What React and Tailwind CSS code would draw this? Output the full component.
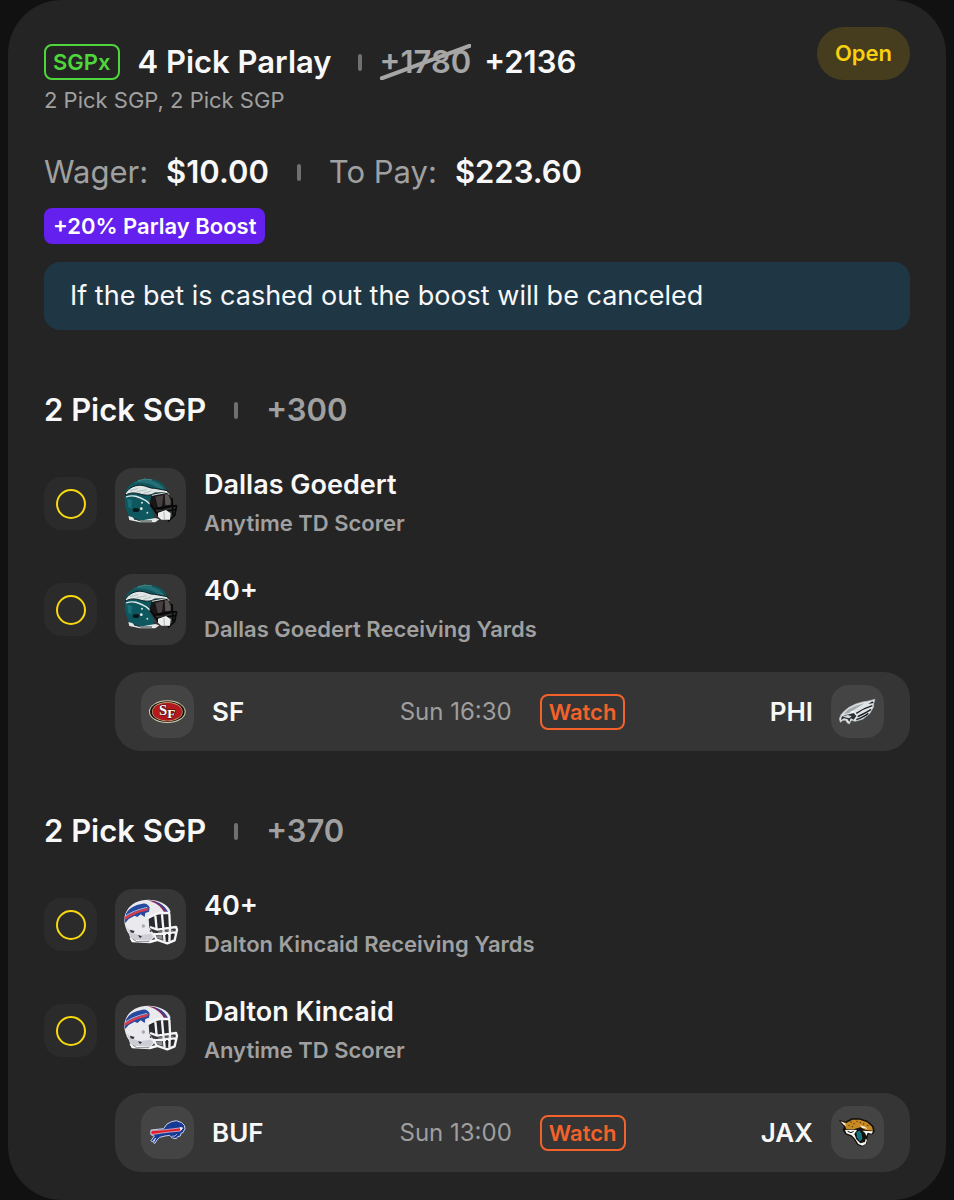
import clsx from "clsx";

const groups = [
  {
    id: 1,
    title: "2 Pick SGP",
    odds: "+300",
    helmet: "eagles",
    legs: [
      { id: 1, title: "Dallas Goedert", market: "Anytime TD Scorer" },
      { id: 2, title: "40+", market: "Dallas Goedert Receiving Yards" },
    ],
    match: { away: "SF", home: "PHI", time: "Sun 16:30" },
  },
  {
    id: 2,
    title: "2 Pick SGP",
    odds: "+370",
    helmet: "bills",
    legs: [
      { id: 1, title: "40+", market: "Dalton Kincaid Receiving Yards" },
      { id: 2, title: "Dalton Kincaid", market: "Anytime TD Scorer" },
    ],
    match: { away: "BUF", home: "JAX", time: "Sun 13:00" },
  },
];

const EaglesHelmet = () => (
  <svg viewBox="1 8 213 213" className="w-full h-full" aria-hidden="true">
    {/* shell */}
    <path
      d="M30 96 C29 80 36 66 50 56 C66 42 92 37 114 42 C138 47 152 60 157 76 L112 90 L104 118 L120 148 L112 168 L48 162 L41 148 C33 132 30 112 30 96 Z"
      fill="#0f575e"
    />
    <path d="M54 53 C78 40 112 41 130 54 C142 62 148 70 151 76 L126 66 C104 52 78 50 54 53 Z" fill="#256f74" />
    <path d="M88 41 L112 44 M70 46 L90 42" stroke="#5f9fa0" strokeWidth="2" />
    {/* wing */}
    <path
      d="M32 84 C44 66 62 58 82 60 C96 62 106 70 120 69 L158 76 L160 82 L120 83 C108 92 90 90 76 86 C62 82 46 80 33 90 Z"
      fill="#dfe6e6"
      stroke="#0b1c1e"
      strokeWidth="3"
    />
    <path d="M46 76 L70 70 M66 79 L96 73 M86 84 L110 77" stroke="#9dabab" strokeWidth="2" />
    <path d="M34 95 C58 86 74 96 94 106 L112 122" stroke="#dfe8e8" strokeWidth="4" fill="none" />
    <path d="M38 100 L52 104 L50 130 L40 124 Z" fill="#187078" />
    <ellipse cx="64" cy="134" rx="10" ry="6" fill="#07181a" />
    <circle cx="82" cy="112" r="3" fill="#d9e6e6" />
    <circle cx="80" cy="130" r="4" fill="#e8f0f0" />
    <circle cx="98" cy="142" r="3" fill="#c6d6d6" />
    {/* visor */}
    <path d="M110 92 L158 82 L170 98 L172 124 L146 134 L122 134 L104 118 Z" fill="#191617" />
    <path d="M122 94 L146 89 L142 122 L130 127 Z" fill="#45403f" />
    <path d="M150 87 L160 87 L168 104 L168 118 L152 120 Z" fill="#595453" />
    <path d="M112 90 L158 81 L163 88" stroke="#cfd5d5" strokeWidth="3" fill="none" />
    {/* cage and chin guard */}
    <path
      d="M122 130 L186 121 M126 142 L184 132 M172 98 L175 150 M186 121 L180 150 L160 168 M108 118 L132 152"
      stroke="#070707"
      strokeWidth="5"
      fill="none"
    />
    <path d="M130 142 L154 134 L168 144 L166 163 L140 163 L130 154 Z" fill="#eceeee" />
    <path d="M148 140 L149 162" stroke="#8c9292" strokeWidth="2" />
    <path d="M41 152 L54 156 L60 163 L84 165 L122 158 L134 162 L122 171 L76 171 L44 164 Z" fill="#e3e7e7" />
    <path d="M58 160 L78 167 L112 167" stroke="#243436" strokeWidth="3" fill="none" />
  </svg>
);

const BillsHelmet = () => (
  <svg viewBox="1 8 213 213" className="w-full h-full" aria-hidden="true">
    {/* shell */}
    <path
      d="M29 100 C30 78 41 60 61 49 C84 37 118 37 142 49 C157 56 166 66 168 78 L122 86 L102 98 L104 124 L122 148 L104 170 L50 165 L43 144 C35 132 29 116 29 100 Z"
      fill="#e9e9ee"
    />
    <path d="M36 122 C48 134 58 144 78 146 L108 142 L116 150 L104 168 L50 163 L44 144 Z" fill="#cdced5" />
    <path d="M98 42 C126 42 148 54 158 78 L148 78 C140 60 122 48 98 42 Z" fill="#8d2550" />
    <path d="M112 43 C136 48 152 60 161 78 L155 78 C146 61 130 50 112 43 Z" fill="#3247a0" />
    {/* charging buffalo decal */}
    <path
      d="M34 82 C44 64 62 56 80 53 C90 48 102 54 105 64 L103 76 L92 80 L90 92 L78 84 L68 92 L60 88 L42 98 L32 110 L30 98 Z"
      fill="#254a9f"
    />
    <path d="M30 92 C46 80 68 72 102 64 L100 72 C70 79 50 87 31 102 Z" fill="#d83b4b" />
    <path d="M31 90 C48 78 68 70 98 63" stroke="#f4f4f7" strokeWidth="2" fill="none" />
    <path d="M46 130 L60 134 L56 140 L48 138 Z M70 146 L82 150 L76 156 Z" fill="#30303a" />
    <circle cx="86" cy="119" r="5" fill="#a9aab1" />
    <circle cx="108" cy="134" r="3" fill="#44444c" />
    {/* face opening */}
    <path d="M104 98 L124 87 L160 82 L164 124 L150 134 L128 136 L106 122 Z" fill="#292a2e" />
    {/* cage */}
    <path
      d="M100 94 L130 80 L166 80 M122 88 L126 130 M142 84 L146 128 M164 82 L166 122 M106 122 L128 130 L184 122 L187 130 L180 162 L158 171 L126 160 L116 140 M118 144 L182 138 M146 128 L150 166 M166 124 L164 166"
      stroke="#f5f5f8"
      strokeWidth="7"
      strokeLinejoin="round"
      fill="none"
    />
    <path d="M124 148 L142 146 L144 160 L128 156 Z" fill="#8c8d94" />
    <path d="M154 144 L160 143 L160 162 L154 162 Z M170 143 L178 142 L172 158 Z" fill="#1f2023" />
    <path d="M130 137 L176 132" stroke="#b9bac2" strokeWidth="2" />
    <path d="M44 154 L62 161 L104 163 L124 158 L130 164 L106 171 L52 168 Z" fill="#fafafc" />
    <path d="M54 158 L66 166 L104 166" stroke="#4b4c53" strokeWidth="2" fill="none" />
  </svg>
);

const NinersLogo = () => (
  <svg viewBox="6 15 159 159" className="w-full h-full" aria-hidden="true">
    <ellipse cx="85" cy="95" rx="55" ry="34" fill="#d9cfb4" />
    <ellipse cx="85" cy="95" rx="52" ry="31" fill="#15110f" />
    <ellipse cx="85" cy="95" rx="46" ry="29" fill="#c9a875" />
    <ellipse cx="85" cy="95" rx="44" ry="27" fill="#b3191d" />
    <g
      fontFamily="Liberation Serif, serif"
      fontWeight="700"
      fill="#ffffff"
      stroke="#3a0d0d"
      strokeWidth="3"
      paintOrder="stroke"
    >
      <text x="60" y="106" fontSize="44">S</text>
      <text x="85" y="113" fontSize="40">F</text>
    </g>
  </svg>
);

const EaglesLogo = () => (
  <svg viewBox="210 15 159 159" className="w-full h-full" aria-hidden="true">
    <path
      d="M342 58 L322 63 L304 66 L284 72 L264 82 L250 93 L240 104 L235 116 L238 127 L246 121 L254 121 L258 128 L265 132 L271 121 L282 124 L294 121 L306 117 L316 109 L326 101 L332 91 L338 80 L338 71 Z"
      fill="#dfe3e5"
      stroke="#b9bfc1"
      strokeWidth="2"
      strokeLinejoin="round"
    />
    <path d="M262 88 L284 77 L310 70 L288 84 L266 98 L248 102 Z" fill="#a3abaf" />
    <path
      d="M286 100 C300 90 318 82 334 77 M290 110 C304 103 318 96 330 88 M286 119 C300 114 314 108 322 100"
      stroke="#1a1f22"
      strokeWidth="4"
      fill="none"
    />
    <path d="M334 64 L322 72 L338 69 Z" fill="#1a1f22" />
    <path d="M264 103 L278 99 L286 108 L278 119 L269 115 L265 126 L259 117 L248 115 L240 121 L242 110 L252 105 Z" fill="#2b3235" />
    <path d="M245 109 L260 105 L272 109 L264 115 L252 112 Z" fill="#d3d9db" />
    <path d="M266 96 L280 92 L276 99 Z" fill="#ffffff" />
  </svg>
);

const BillsLogo = () => (
  <svg viewBox="6 20 159 159" className="w-full h-full" aria-hidden="true">
    <path
      d="M36 92 L74 88 L84 74 L98 67 L112 64 L128 70 L136 78 L138 88 L132 100 L126 102 L124 110 L116 112 L112 118 L100 116 L92 108 L78 110 L62 114 L54 122 L48 132 L43 130 L50 116 L40 128 L36 124 L46 110 L36 106 Z"
      fill="#153a94"
      stroke="#c9cfea"
      strokeWidth="3"
      strokeLinejoin="round"
    />
    <path d="M36 94 L80 91 L130 85 L124 95 L84 99 L36 106 Z" fill="#e01f2e" stroke="#f4d6dc" strokeWidth="2" />
    <path d="M122 83 L132 86 L125 94 Z" fill="#f3f4fa" />
    <path d="M98 111 L108 110 L114 104" stroke="#dfe3f4" strokeWidth="2" fill="none" />
  </svg>
);

const JaguarsLogo = () => (
  <svg viewBox="240 50 159 159" className="w-full h-full" aria-hidden="true">
    <path
      d="M266 94 L284 98 L302 88 L326 88 L350 96 L366 110 L370 126 L364 134 L350 134 L348 146 L346 162 L334 171 L320 166 L310 150 L300 140 L284 134 L276 122 L280 112 Z"
      fill="#14110d"
      stroke="#14110d"
      strokeWidth="3"
      strokeLinejoin="round"
    />
    <path d="M270 96 L286 101 L304 91 L326 91 L348 99 L363 112 L366 124 L344 122 L328 114 L308 120 L286 120 L282 110 Z" fill="#c98a22" />
    <path d="M268 96 L282 102 L286 110 L278 106 Z M326 108 L342 112 L350 118 L334 116 Z" fill="#f4efe4" />
    <path d="M282 122 L306 121 L318 122 L310 134 L316 150 L328 162 L342 158 L344 148 L348 152 L344 164 L334 169 L322 164 L312 148 L302 138 L286 132 Z" fill="#f6f5f1" />
    <path d="M316 128 L326 124 L332 134 L334 150 L326 156 L318 144 Z" fill="#0f7480" />
    <path d="M334 124 L366 126 L362 133 L350 130 L346 140 L342 130 Z" fill="#f6f5f1" />
    <g fill="#3c2a10">
      <circle cx="300" cy="98" r="2" />
      <circle cx="309" cy="103" r="2" />
      <circle cx="318" cy="96" r="2" />
      <circle cx="294" cy="108" r="2" />
      <circle cx="328" cy="100" r="2" />
      <circle cx="304" cy="112" r="2" />
      <circle cx="338" cy="104" r="2" />
      <circle cx="350" cy="108" r="2" />
    </g>
    <path d="M290 126 L300 130 L308 126" stroke="#14110d" strokeWidth="3" fill="none" />
  </svg>
);

const helmets = { eagles: EaglesHelmet, bills: BillsHelmet };
const logos = { SF: NinersLogo, PHI: EaglesLogo, BUF: BillsLogo, JAX: JaguarsLogo };

const Divider = ({ className }) => (
  <span className={clsx("w-1 h-[17px] rounded-xs bg-[#707070] shrink-0", className)} />
);

const TeamLogo = ({ team }) => {
  const Logo = logos[team];
  return (
    <div className="w-[53px] h-[53px] rounded-[18px] bg-[#444444] overflow-hidden shrink-0">
      <Logo />
    </div>
  );
};

const Leg = ({ leg, helmet }) => {
  const Helmet = helmets[helmet];
  return (
    <li className="flex items-center gap-[18px]">
      <div className="w-[53px] h-[53px] rounded-[18px] bg-[#2b2b2b] flex items-center justify-center shrink-0">
        <span className="w-[30px] h-[30px] rounded-full border-2 border-[#f8d90f]" />
      </div>
      <div className="w-[71px] h-[71px] rounded-[18px] bg-[#363636] overflow-hidden shrink-0">
        <Helmet />
      </div>
      <div className="flex flex-col gap-2 min-w-0">
        <p className="text-[27px] leading-[30px] font-semibold text-[#f8f8f8]">{leg.title}</p>
        <p className="text-[22px] leading-[30px] font-semibold text-[#a0a0a0]">{leg.market}</p>
      </div>
    </li>
  );
};

const MatchBar = ({ match }) => (
  <div className="ml-[71px] mt-[27px] px-[26px] py-[13px] rounded-[26px] bg-[#353535] grid grid-cols-[1fr_auto_1fr] items-center">
    <div className="flex items-center gap-[18px]">
      <TeamLogo team={match.away} />
      <span className="text-[26px] leading-[30px] font-semibold text-[#f8f8f8]">{match.away}</span>
    </div>
    <div className="flex items-center gap-7">
      <span className="text-[24px] leading-[30px] text-[#9e9e9e]">{match.time}</span>
      <button className="h-9 px-[7px] rounded-lg border-2 border-[#f2622a] text-[22px] leading-[30px] font-semibold text-[#f2622a] cursor-pointer">
        Watch
      </button>
    </div>
    <div className="flex items-center justify-end gap-[18px]">
      <span className="text-[26px] leading-[30px] font-semibold text-[#f8f8f8]">{match.home}</span>
      <TeamLogo team={match.home} />
    </div>
  </div>
);

const PickGroup = ({ group }) => (
  <section className="mt-[60px]">
    <div className="flex items-center text-[31px] leading-[40px] font-semibold">
      <h2 className="text-[#f8f8f8]">{group.title}</h2>
      <Divider className="mx-7" />
      <span className="text-[#a0a0a0]">{group.odds}</span>
    </div>
    <ul className="mt-[38px] flex flex-col gap-[35px]">
      {group.legs.map((leg) => (
        <Leg key={leg.id} leg={leg} helmet={group.helmet} />
      ))}
    </ul>
    <MatchBar match={group.match} />
  </section>
);

const App = () => {
  return (
    <div className="min-h-screen bg-[#111111] px-2 font-['Inter',sans-serif]">
      <main className="rounded-[54px] bg-[#242424] px-9 pt-[27px] pb-7">
        {/* Header */}
        <header className="flex items-start justify-between">
          <div className="pt-[17px]">
            <div className="flex items-center h-9 text-[31px] leading-[36px] font-semibold text-[#f8f8f8]">
              <span className="h-9 px-[7px] mr-[18px] rounded-lg border-2 border-[#4fd63c] text-[22px] leading-[32px] font-semibold text-[#4fd63c]">
                SGPx
              </span>
              <h1>4 Pick Parlay</h1>
              <Divider className="ml-[26px] mr-[18px]" />
              <span className="relative mr-[13px] text-[#a6a6a6]">
                +1780
                <svg
                  viewBox="0 0 92 36"
                  preserveAspectRatio="none"
                  className="absolute inset-0 w-full h-full"
                  aria-hidden="true"
                >
                  <path d="M0 35 L92 1" stroke="#a6a6a6" strokeWidth="4" />
                </svg>
              </span>
              <span>+2136</span>
            </div>
            <p className="mt-1.5 text-[22px] leading-[28px] text-[#a0a0a0]">2 Pick SGP, 2 Pick SGP</p>
          </div>
          <span className="px-[18px] rounded-full bg-[#453d1e] text-[22px] leading-[53px] font-semibold text-[#f8d00f]">
            Open
          </span>
        </header>

        {/* Wager */}
        <div className="mt-[38px] flex items-center text-[31px] leading-[40px] text-[#a0a0a0]">
          <span>Wager:</span>
          <span className="ml-[18px] font-semibold text-[#f8f8f8]">$10.00</span>
          <Divider className="mx-7" />
          <span>To Pay:</span>
          <span className="ml-[18px] font-semibold text-[#f8f8f8]">$223.60</span>
        </div>

        {/* Boost */}
        <span className="mt-4 block w-fit h-9 px-[9px] rounded-lg bg-[#6320ee] text-[22px] leading-[36px] font-semibold text-white">
          +20% Parlay Boost
        </span>
        <p className="mt-[18px] px-[26px] py-[19px] rounded-2xl bg-[#1f3745] text-[27px] leading-[30px] text-[#f8f8f8]">
          If the bet is cashed out the boost will be canceled
        </p>

        {groups.map((group) => (
          <PickGroup key={group.id} group={group} />
        ))}
      </main>
    </div>
  );
};

export default App;
